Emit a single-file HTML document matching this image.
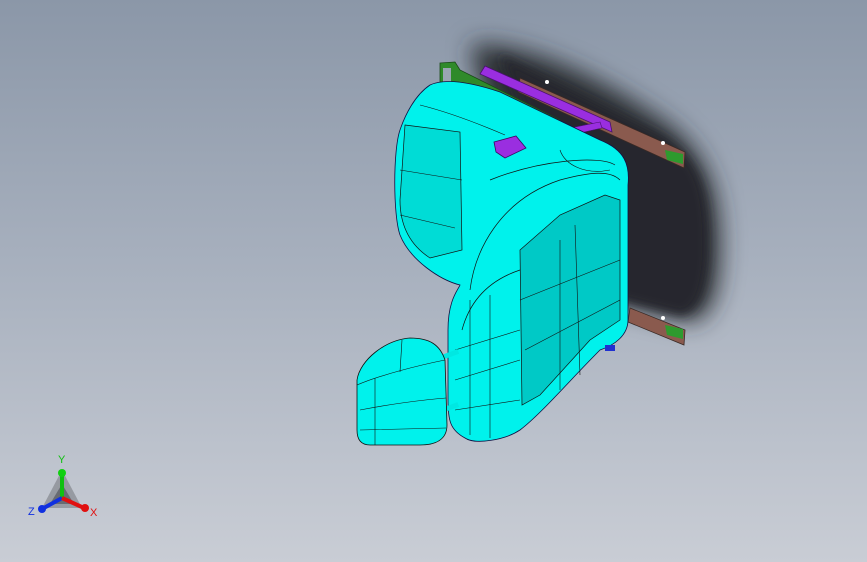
<!DOCTYPE html>
<html><head><style>
html,body{margin:0;padding:0;}
body{width:867px;height:562px;overflow:hidden;background:linear-gradient(180deg,#8b97a8 0%,#a6afbd 45%,#c9cdd5 100%);font-family:"Liberation Sans",sans-serif;}
svg{position:absolute;left:0;top:0;}
</style></head><body>
<svg width="867" height="562" viewBox="0 0 867 562">
<defs>
<filter id="b" x="-50%" y="-50%" width="200%" height="200%"><feGaussianBlur stdDeviation="12"/></filter>
<filter id="b2"><feGaussianBlur stdDeviation="5"/></filter>
</defs>
<!-- shadow -->
<path d="M470 45 C520 40 600 75 670 125 C712 158 722 200 720 260 C718 300 708 320 690 322 L600 300 L490 120 Z" fill="#2a2d33" filter="url(#b)"/>
<path d="M500 55 L660 135 C705 162 710 200 708 260 C705 298 694 314 680 315 L620 300 L530 120 Z" fill="#25282e" filter="url(#b2)"/>
<!-- rails -->
<path d="M520 78 L685 152 L684 168 L518 92 Z" fill="#8a5a4e" stroke="#3a2a25" stroke-width="0.8"/>
<path d="M630 308 L685 330 L684 345 L628 322 Z" fill="#8a5a4e" stroke="#3a2a25" stroke-width="0.8"/>
<path d="M665 150 l18 4 l0 10 l-16 -4 Z" fill="#2e9a2e"/>
<path d="M665 325 l18 4 l0 10 l-16 -4 Z" fill="#2e9a2e"/>
<circle cx="547" cy="82" r="2" fill="#fff"/><circle cx="663" cy="143" r="2" fill="#fff"/><circle cx="663" cy="318" r="2" fill="#fff"/>
<!-- green arm -->
<path d="M440 63 L455 62 L460 70 L560 120 L555 128 L458 82 L455 90 L440 88 Z" fill="#2f8a2a" stroke="#1a4a18" stroke-width="0.8"/>
<rect x="443" y="68" width="8" height="14" fill="#9aa5b3"/>
<!-- purple bar -->
<path d="M485 66 L610 122 L612 132 L480 74 Z" fill="#9a2ee0" stroke="#4a1070" stroke-width="0.8"/>
<path d="M520 145 C545 132 570 128 600 122 L602 128 C575 134 548 140 525 152 Z" fill="#9a2ee0" stroke="#4a1070" stroke-width="0.6"/>
<!-- main body silhouette -->
<path d="M430 85 C445 78 470 82 500 92 L600 140 C625 150 630 165 628 185 L628 320 C628 335 615 345 600 350 C570 380 540 415 520 430 C505 440 475 445 465 438 C450 430 448 420 448 400 L448 330 C448 300 458 290 460 285 C440 280 410 260 400 235 C393 215 393 150 400 130 C405 115 415 95 430 85 Z" fill="#00f2ec" stroke="#114" stroke-width="0.8"/>
<!-- darker panels -->
<path d="M405 125 L460 132 L462 250 L430 258 C410 245 400 225 400 200 Z" fill="#00dcd6" stroke="#111" stroke-width="0.7"/>
<path d="M520 250 L560 215 L605 195 L620 200 L620 320 L590 340 L540 395 L522 405 Z" fill="#00c9c6" stroke="#111" stroke-width="0.7"/>
<path d="M490 180 C540 160 600 155 615 165" fill="none" stroke="#111" stroke-width="0.7"/>
<path d="M470 290 C475 250 500 200 560 180 C590 172 610 170 620 180" fill="none" stroke="#111" stroke-width="0.7"/>
<path d="M462 330 C470 300 490 280 520 270" fill="none" stroke="#111" stroke-width="0.7"/>
<path d="M455 350 L520 330 M455 380 L520 360 M455 410 L520 400 M470 300 L470 435 M490 295 L490 438" fill="none" stroke="#111" stroke-width="0.6"/>
<path d="M560 240 L560 390 M575 225 L580 375 M520 300 L620 260 M525 350 L620 300 M400 170 L462 180 M400 215 L455 228" fill="none" stroke="#111" stroke-width="0.6"/>
<path d="M420 105 C440 110 470 120 505 135 M560 150 C565 165 585 175 610 170" fill="none" stroke="#111" stroke-width="0.6"/>
<!-- purple block -->
<path d="M494 142 L516 136 L526 148 L505 158 L496 152 Z" fill="#9a2ee0" stroke="#3a0a60" stroke-width="0.8"/>
<!-- headrest posts -->
<rect x="443" y="352" width="16" height="5" fill="#00e8e2" transform="rotate(-20 450 355)"/>
<rect x="443" y="405" width="16" height="5" fill="#00e8e2" transform="rotate(-20 450 408)"/>
<!-- headrest -->
<path d="M357 380 C360 360 385 340 410 338 C430 338 440 345 445 360 L447 425 C447 440 435 445 420 445 L370 445 C360 445 357 438 357 430 Z" fill="#00f2ec" stroke="#111" stroke-width="0.8"/>
<path d="M357 385 C380 375 420 365 445 360 M360 410 C385 405 420 400 446 398 M360 430 L446 428 M375 378 L375 445 M402 340 L400 372" fill="none" stroke="#111" stroke-width="0.6"/>
<rect x="605" y="345" width="10" height="6" fill="#2030d0"/>
<!-- triad -->
<path d="M62 470 L82 508 L42 508 Z" fill="#6b6e74" opacity="0.5"/>
<path d="M62 484 L74 504 L50 504 Z" fill="#4a4d52" opacity="0.6"/>
<line x1="62" y1="498" x2="62" y2="474" stroke="#10c010" stroke-width="4"/>
<circle cx="62" cy="473" r="4" fill="#10d010"/>
<line x1="62" y1="498" x2="42" y2="509" stroke="#1030e0" stroke-width="4"/>
<circle cx="42" cy="509" r="4" fill="#1030e0"/>
<line x1="62" y1="498" x2="84" y2="508" stroke="#e01010" stroke-width="4"/>
<circle cx="85" cy="508" r="4" fill="#e01010"/>
<text x="58" y="463" font-size="11" fill="#10c010">Y</text>
<text x="28" y="515" font-size="11" fill="#1030e0">Z</text>
<text x="90" y="516" font-size="11" fill="#e01010">X</text>
</svg>
</body></html>
